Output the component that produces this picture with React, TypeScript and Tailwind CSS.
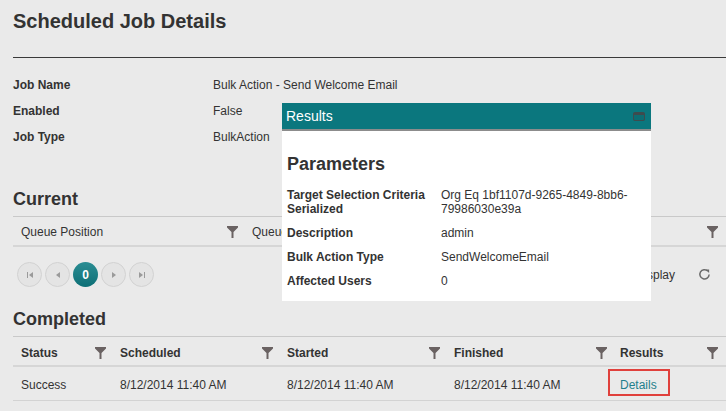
import React from "react";

const Filter = () => (
  <svg width="11" height="12" viewBox="0 0 11 12" className="shrink-0">
    <path d="M0 0H11V1.5L6.5 6V12H4.5V6L0 1.5Z" fill="#6a6262" />
  </svg>
);

const PagerBtn = ({ children }: { children: React.ReactNode }) => (
  <div className="w-[25px] h-[25px] rounded-full border border-[#d2d2d2] bg-[#e4e4e4] flex items-center justify-center">
    {children}
  </div>
);

export default function App() {
  return (
    <div className="relative w-[726px] h-[411px] overflow-hidden bg-[#eaeaea] text-[#333] font-['Liberation_Sans',Arial,sans-serif] pl-[13px]">
      <h1 className="pt-[9px] text-[20px] leading-[24px] font-bold text-[#333]">Scheduled Job Details</h1>
      <div className="mt-[24px] h-px bg-[#3a3a3a]" />

      <div className="mt-[14px] text-[12px]">
        {[
          ["Job Name", "Bulk Action - Send Welcome Email"],
          ["Enabled", "False"],
          ["Job Type", "BulkAction"],
        ].map(([k, v]) => (
          <div key={k} className="flex h-[26px] items-center">
            <div className="w-[200px] font-bold">{k}</div>
            <div>{v}</div>
          </div>
        ))}
      </div>

      {/* Current */}
      <h2 className="mt-[38px] text-[18px] leading-[22px] font-bold">Current</h2>
      <div className="mt-[6px] h-px bg-[#c9c9c9]" />
      <div className="flex h-[30px] items-center pt-[2px] text-[12px] border-b-2 border-[#d6d6d6]">
        <div className="w-[231px] flex items-center justify-between pl-[8px] pr-[6px]">
          <span>Queue Position</span>
          <Filter />
        </div>
        <div className="flex-1 flex items-center justify-between pl-[8px] pr-[8px]">
          <span>Queue Name</span>
          <Filter />
        </div>
      </div>
      <div className="mt-[15px] flex items-center h-[25px] text-[12px]">
        <div className="ml-[4px] flex items-center gap-[3px]">
          <PagerBtn>
            <svg width="8" height="8" viewBox="0 0 8 8">
              <rect x="1" y="1" width="1" height="6" fill="#9a9a9a" />
              <path d="M7 1V7L3 4Z" fill="#9a9a9a" />
            </svg>
          </PagerBtn>
          <PagerBtn>
            <svg width="8" height="8" viewBox="0 0 8 8">
              <path d="M6 1V7L2 4Z" fill="#9a9a9a" />
            </svg>
          </PagerBtn>
          <div className="w-[25px] h-[25px] rounded-full bg-gradient-to-b from-[#2a8d93] to-[#0c6f76] text-white font-bold text-[12px] flex items-center justify-center">
            0
          </div>
          <PagerBtn>
            <svg width="8" height="8" viewBox="0 0 8 8">
              <path d="M2 1V7L6 4Z" fill="#9a9a9a" />
            </svg>
          </PagerBtn>
          <PagerBtn>
            <svg width="8" height="8" viewBox="0 0 8 8">
              <path d="M1 1V7L5 4Z" fill="#9a9a9a" />
              <rect x="6" y="1" width="1" height="6" fill="#9a9a9a" />
            </svg>
          </PagerBtn>
        </div>
        <div className="ml-auto flex items-center">
          <span>No items to display</span>
          <svg width="13" height="13" viewBox="0 0 14 14" className="ml-[23px] mr-[15px]">
            <path d="M10.5 3.2A5 5 0 1 0 12 7" fill="none" stroke="#6a6a6a" strokeWidth="1.6" />
            <path d="M8 1.5H12V5.5Z" fill="#6a6a6a" />
          </svg>
        </div>
      </div>

      {/* Completed */}
      <h2 className="mt-[21px] text-[18px] leading-[22px] font-bold">Completed</h2>
      <div className="mt-[6px] h-px bg-[#c9c9c9]" />
      <div className="flex h-[30px] items-center pt-[3px] text-[12px] font-bold border-b-2 border-[#d6d6d6]">
        <div className="w-[99px] flex items-center justify-between pl-[8px] pr-[6px]">
          <span>Status</span>
          <Filter />
        </div>
        <div className="w-[167px] flex items-center justify-between pl-[8px] pr-[6px]">
          <span>Scheduled</span>
          <Filter />
        </div>
        <div className="w-[167px] flex items-center justify-between pl-[8px] pr-[6px]">
          <span>Started</span>
          <Filter />
        </div>
        <div className="w-[166px] flex items-center justify-between pl-[8px] pr-[5px]">
          <span>Finished</span>
          <Filter />
        </div>
        <div className="flex-1 flex items-center justify-between pl-[8px] pr-[8px]">
          <span>Results</span>
          <Filter />
        </div>
      </div>
      <div className="flex h-[34px] items-center pt-[2px] text-[12px] border-b border-[#d3d3d3]">
        <div className="w-[99px] pl-[8px]">Success</div>
        <div className="w-[167px] pl-[8px]">8/12/2014 11:40 AM</div>
        <div className="w-[167px] pl-[8px]">8/12/2014 11:40 AM</div>
        <div className="w-[166px] pl-[8px]">8/12/2014 11:40 AM</div>
        <div className="flex-1 pl-[8px] relative">
          <span className="text-[#1f7f8c]">Details</span>
          <div className="absolute left-[-4px] top-[-7px] w-[62px] h-[27px] border-2 border-[#e0403c]" />
        </div>
      </div>

      {/* Results modal */}
      <div className="absolute left-[282px] top-[103px] w-[369px] h-[198px] bg-white">
        <div className="h-[28px] bg-[#0b777e] border-b-2 border-[#8c8c8c] flex items-center justify-between pl-[4px] pr-[6px]">
          <span className="text-white text-[14px]">Results</span>
          <div className="w-[12px] h-[9px] rounded-[2px] border-[1.5px] border-t-[3px] border-[#3e4b4e] bg-[#0d6d73]" />
        </div>
        <div className="pt-[22px] pl-[5px] text-[12px]">
          <h3 className="text-[18px] leading-[22px] font-bold">Parameters</h3>
          <div className="mt-[8px]">
            <div className="flex py-[5px] leading-[14px]">
              <div className="w-[154px] font-bold">
                Target Selection Criteria
                <br />
                Serialized
              </div>
              <div>
                Org Eq 1bf1107d-9265-4849-8bb6-
                <br />
                79986030e39a
              </div>
            </div>
            {[
              ["Description", "admin"],
              ["Bulk Action Type", "SendWelcomeEmail"],
              ["Affected Users", "0"],
            ].map(([k, v]) => (
              <div key={k} className="flex py-[5px] leading-[14px]">
                <div className="w-[154px] font-bold">{k}</div>
                <div>{v}</div>
              </div>
            ))}
          </div>
        </div>
      </div>
    </div>
  );
}
